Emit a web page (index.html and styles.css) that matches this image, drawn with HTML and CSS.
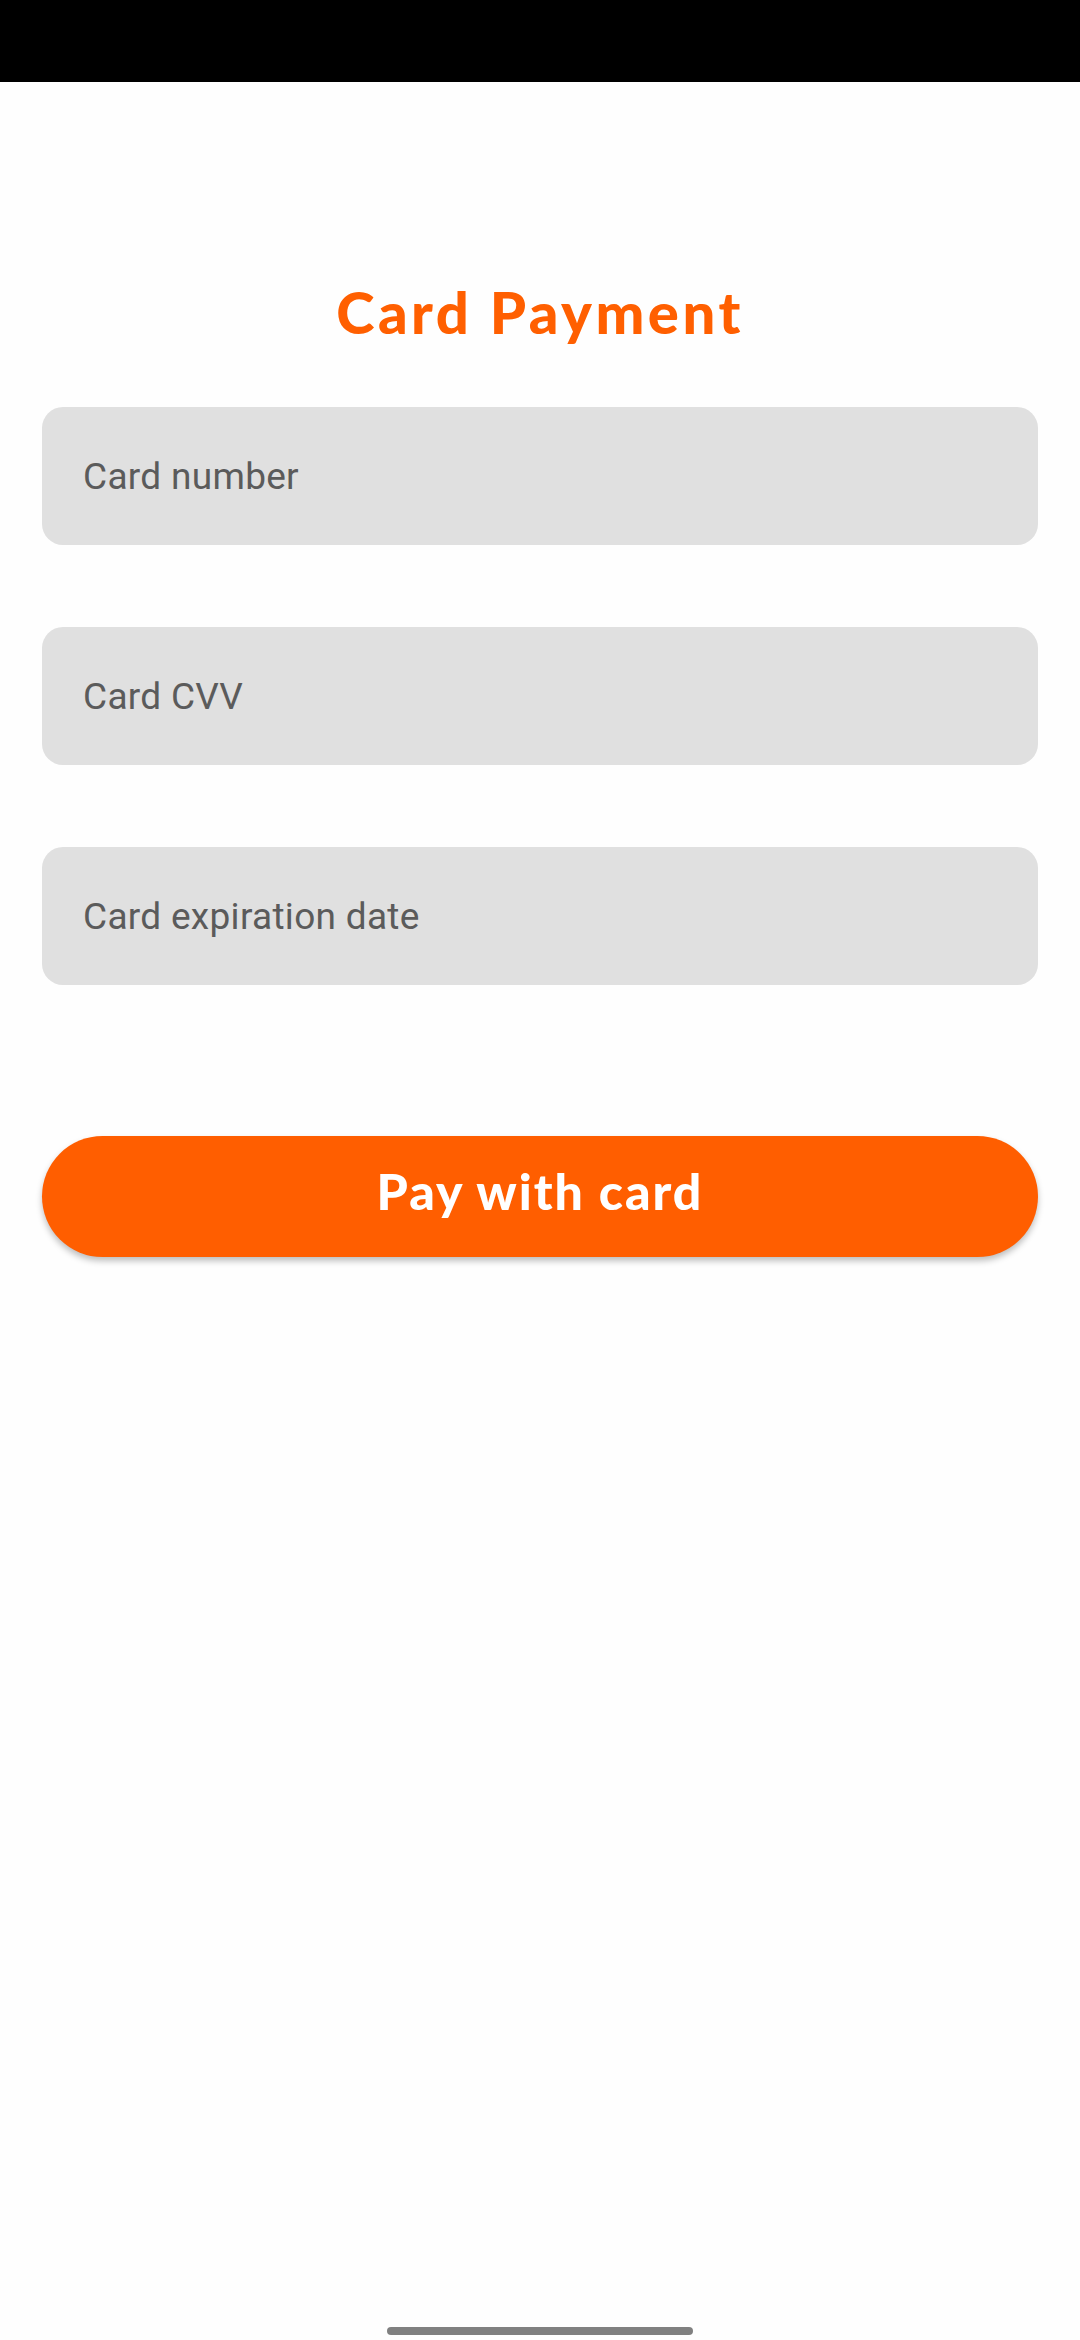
FILE: index.html
```html
<!DOCTYPE html>
<html lang="en">
<head>
<meta charset="utf-8">
<title>Card Payment</title>
<link rel="stylesheet" href="styles.css">
</head>
<body>
<div class="status-bar"></div>
<main class="content">
  <h1 class="title">Card Payment</h1>
  <div class="fields">
    <div class="field"><span class="placeholder">Card number</span></div>
    <div class="field"><span class="placeholder">Card CVV</span></div>
    <div class="field"><span class="placeholder">Card expiration date</span></div>
  </div>
  <button class="pay-btn">Pay with card</button>
</main>
<div class="home-indicator"></div>
</body>
</html>
```
FILE: styles.css
```css
html, body {
  margin: 0;
  padding: 0;
}
body {
  width: 1080px;
  height: 2340px;
  background: #fefefe;
  position: relative;
  overflow: hidden;
  font-family: Roboto, "Liberation Sans", sans-serif;
}
.status-bar {
  height: 82px;
  background: #000;
}
.content {
  display: flex;
  flex-direction: column;
  padding: 0 42px;
}
.title {
  margin: 190px 0 0;
  height: 80px;
  line-height: 80px;
  text-align: center;
  font-family: Lato, "Open Sans", sans-serif;
  font-weight: 900;
  font-size: 58px;
  letter-spacing: 3.5px;
  color: #ff5f00;
}
.fields {
  margin-top: 55px;
  display: flex;
  flex-direction: column;
  gap: 82px;
}
.field {
  height: 138px;
  background: #e0e0e0;
  border-radius: 21px;
  display: flex;
  align-items: center;
  padding-left: 41px;
}
.placeholder {
  font-size: 37px;
  color: #5b5b5b;
  letter-spacing: 0.3px;
}
.pay-btn {
  margin-top: 151px;
  height: 121px;
  border: none;
  border-radius: 61px;
  background: #ff5e00;
  color: #fff;
  font-family: Lato, "Open Sans", sans-serif;
  font-weight: 900;
  font-size: 50px;
  letter-spacing: 2px;
  padding: 0 0 12px;
  box-shadow: 0 4px 6px rgba(0,0,0,0.25);
}
.home-indicator {
  position: absolute;
  left: 387px;
  top: 2327px;
  width: 306px;
  height: 8px;
  border-radius: 4px;
  background: #808080;
}
```
